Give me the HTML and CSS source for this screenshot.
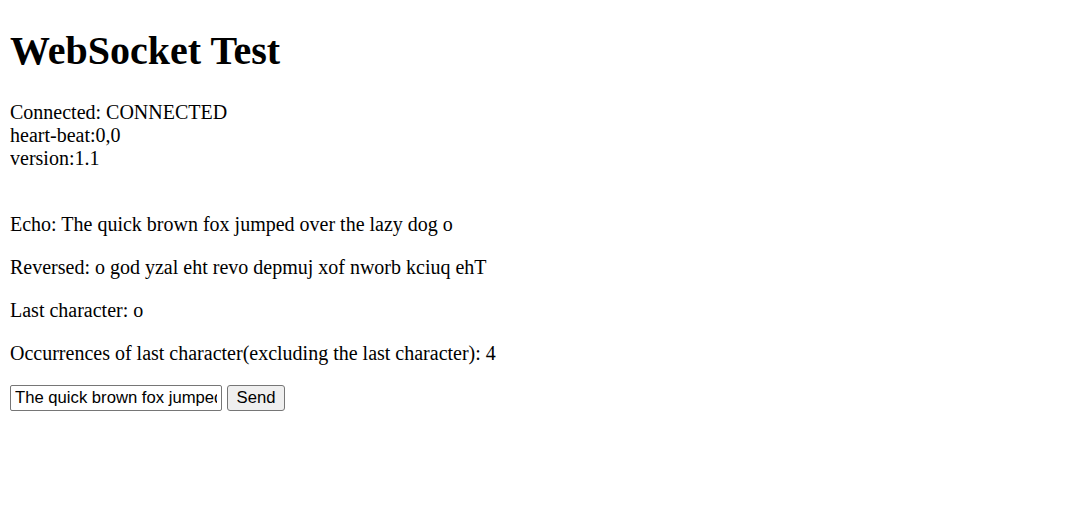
FILE: index.html
```html
<!DOCTYPE html>
<html>
<head>
<meta charset="utf-8">
<title>WebSocket Test</title>
<link rel="stylesheet" href="styles.css">
</head>
<body class="page">
<h1 class="title">WebSocket Test</h1>
<div class="status">Connected: CONNECTED<br>heart-beat:0,0<br>version:1.1<br><br></div>
<p class="line">Echo: The quick brown fox jumped over the lazy dog o</p>
<p class="line">Reversed: o god yzal eht revo depmuj xof nworb kciuq ehT</p>
<p class="line">Last character: o</p>
<p class="line">Occurrences of last character(excluding the last character): 4</p>
<div class="controls"><input class="msg" type="text" value="The quick brown fox jumped over the lazy dog o"> <button class="send" type="button">Send</button></div>
</body>
</html>
```
FILE: styles.css
```css
.page {
  margin: 10px;
  font-family: "Liberation Serif", "Times New Roman", serif;
  font-size: 20px;
  color: #000;
  background: #fff;
}
.title {
  font-size: 40px;
  font-weight: bold;
  margin: 16.8px 0 26.8px;
}
.status {
  margin: 0;
}
.line {
  margin: 20px 0;
}
.controls {
  margin: 0;
}
.msg {
  box-sizing: border-box;
  width: 212px;
  height: 26px;
  padding: 1px 4px;
  border: 1px solid #767676;
  border-radius: 2px;
  font-family: "Liberation Sans", Arial, sans-serif;
  font-size: 16.67px;
  color: #000;
  background: #fff;
  vertical-align: baseline;
}
.send {
  box-sizing: border-box;
  width: 58px;
  height: 26px;
  padding: 0 6px;
  border: 1px solid #767676;
  border-radius: 3px;
  background: #efefef;
  font-family: "Liberation Sans", Arial, sans-serif;
  font-size: 16.67px;
  color: #000;
}
```
